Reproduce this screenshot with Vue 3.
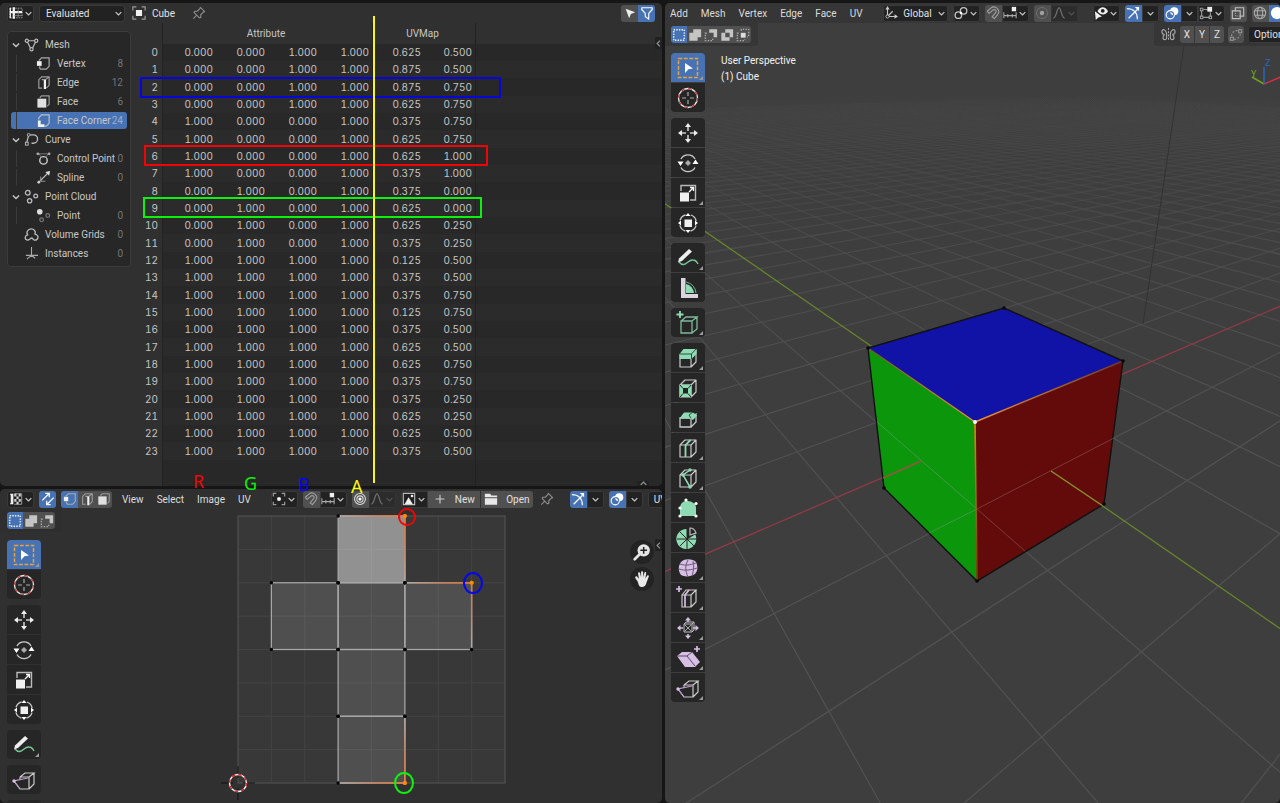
<template>
  <div class="workspace">
    <!-- Spreadsheet -->
    <section class="pane sheet">
      <header class="bar">
        <button class="btn dark wide" aria-label="Editor type"><Icon name="sheet" /><Icon name="down" :size="9" /></button>
        <label class="select-wrap">
          <select v-model="evalState" class="select" aria-label="Object evaluation state">
            <option>Evaluated</option>
            <option>Original</option>
          </select>
          <Icon name="down" :size="9" />
        </label>
        <span class="object"><Icon name="object" /></span>
        <span class="object-name">Cube</span>
        <button class="pin spaced" aria-label="Pin"><Icon name="pin" /></button>
        <div class="group push">
          <button class="btn gray" aria-label="Show only selected"><Icon name="cursorArrow" /></button>
          <button class="btn blue" aria-label="Filter"><Icon name="funnel" /></button>
        </div>
      </header>
      <div class="sheet-body">
        <aside class="tree-side">
          <ul class="tree">
            <li v-for="node in tree" :key="node.label" class="node"
              :class="{ child: node.child, root: !node.child, selected: node.label === selectedDomain }"
              @click="selectedDomain = node.label">
              <Icon v-if="node.open" class="twisty" name="down" :size="10" />
              <Icon class="node-icon" :name="node.icon" :size="15" />
              <span class="node-label">{{ node.label }}</span>
              <span class="count">{{ node.count }}</span>
            </li>
          </ul>
        </aside>
        <div class="table-wrap">
          <table>
            <colgroup>
              <col class="c-index"><col class="c-wide"><col class="c-attr"><col class="c-attr"><col class="c-attr">
              <col class="c-attr"><col class="c-uv"><col>
            </colgroup>
            <thead>
              <tr>
                <th class="index"></th>
                <th colspan="4" class="line">Attribute</th>
                <th colspan="2" class="line">UVMap</th>
                <th></th>
              </tr>
            </thead>
            <tbody>
              <tr v-for="(row, i) in rows" :key="i">
                <td class="index">{{ i }}</td>
                <td v-for="(value, c) in row" :key="c" :class="{ line: c === 3 || c === 5 }">{{ value.toFixed(3) }}</td>
                <td></td>
              </tr>
              <tr class="rest">
                <td class="index"></td>
                <td colspan="4" class="line"></td>
                <td colspan="2" class="line"></td>
                <td></td>
              </tr>
            </tbody>
          </table>
          <button class="tab side-tab" aria-label="Show sidebar"><Icon name="left" :size="9" /></button>
          <button class="tab bottom-tab" aria-label="Show footer"><Icon name="up" :size="9" /></button>
        </div>
      </div>
    </section>

    <!-- 3D viewport -->
    <section class="pane viewport">
      <svg class="canvas">
        <defs>
          <linearGradient id="fade" gradientUnits="userSpaceOnUse" x1="0" y1="90" x2="0" y2="440">
            <stop offset="0" stop-color="#4f4f4f" stop-opacity="0" />
            <stop offset="0.15" stop-color="#4f4f4f" stop-opacity="0.3" />
            <stop offset="0.5" stop-color="#4f4f4f" stop-opacity="0.8" />
            <stop offset="1" stop-color="#525252" />
          </linearGradient>
          <linearGradient id="edgeL" gradientUnits="userSpaceOnUse" x1="310" y1="419" x2="203" y2="345">
            <stop offset="0" stop-color="#f0913c" /><stop offset="1" stop-color="#6b5a20" />
          </linearGradient>
          <linearGradient id="edgeR" gradientUnits="userSpaceOnUse" x1="310" y1="419" x2="458" y2="358">
            <stop offset="0" stop-color="#f0913c" /><stop offset="1" stop-color="#6a3a2a" />
          </linearGradient>
          <linearGradient id="edgeD" gradientUnits="userSpaceOnUse" x1="310" y1="419" x2="313" y2="578">
            <stop offset="0" stop-color="#d98a10" /><stop offset="1" stop-color="#5f4a08" />
          </linearGradient>
        </defs>
        <path v-for="(line, i) in floorLines" :key="i" :d="line.d" fill="none" stroke="url(#fade)"
          :stroke-width="line.major ? 1.6 : 1.1" />
        <path d="M519 42L478 321" stroke="#323232" />
        <path :d="axisLine('x')" stroke="#933a47" stroke-width="1.3" />
        <path :d="axisLine('y')" stroke="#66862b" stroke-width="1.3" />
        <path d="M203 345L339 305L458 358L310 419z" fill="#1112a6" />
        <path d="M203 345L310 419L312 578L219 485z" fill="#0b960b" />
        <path d="M310 419L458 358L439 501L312 578z" fill="#620b0a" />
        <path d="M203 345L339 305L458 358L439 501L312 578L219 485z" fill="none" stroke="#111" stroke-width="1.4" />
        <path d="M212 419L312 506L264 530" fill="none" stroke="#9a9a9a" stroke-opacity="0.4" />
        <path d="M449 435L312 506L360 548" fill="none" stroke="#a08080" stroke-opacity="0.4" />
        <path d="M256 458L218 475" stroke="#93583f" stroke-width="1.4" />
        <path d="M386 468L438 503" stroke="#86982c" stroke-width="1.4" />
        <path d="M310 419L203 345" stroke="url(#edgeL)" stroke-width="1.4" />
        <path d="M310 419L458 358" stroke="url(#edgeR)" stroke-width="1.4" />
        <path d="M310 419L312 578" stroke="url(#edgeD)" stroke-width="1.6" />
        <circle v-for="(p, i) in cubePoints" :key="i" :cx="p[0]" :cy="p[1]" r="1.8" fill="#060606" />
        <circle cx="310" cy="419" r="2" fill="#fff" />
        <g fill="none" stroke-width="1.5">
          <path d="M599 81L616 74" stroke="#d42f42" />
          <path d="M599 81L587 74" stroke="#6aa521" />
          <path d="M599 81V64" stroke="#2a66bd" />
        </g>
        <text x="586" y="74" class="axis-text" fill="#6aa521">Y</text>
        <text x="600" y="63" class="axis-text" fill="#2a66bd">Z</text>
      </svg>

      <header class="bar flush">
        <nav class="menus">
          <button v-for="m in viewMenus" :key="m" class="menu">{{ m }}</button>
        </nav>
        <button class="btn dark global spaced"><Icon name="axes" /><span>Global</span><Icon name="down" :size="9" /></button>
        <button class="btn dark wide" aria-label="Pivot point"><Icon name="link" /><Icon name="down" :size="9" /></button>
        <SnapGroup />
        <FalloffGroup />
        <button class="btn dark wide spaced" aria-label="Visibility"><Icon name="eye" /><Icon name="down" :size="9" /></button>
        <ToggleGroup icon="gizmo" label="Gizmos" />
        <div class="group">
          <button class="btn blue" aria-label="Overlays"><Icon name="overlay" /></button>
          <button class="btn dark" aria-label="Overlay options"><Icon name="down" :size="9" /></button>
          <button class="btn dark wide" aria-label="Mesh edit overlays"><Icon name="editBox" /><Icon name="down" :size="9" /></button>
        </div>
        <button class="btn gray" aria-label="X-Ray"><Icon name="xray" /></button>
        <div class="group">
          <button class="btn gray" aria-label="Wireframe"><Icon name="globe" /></button>
          <button class="btn blue" aria-label="Solid"><Icon name="ball" /></button>
        </div>
      </header>

      <div class="settings">
        <div class="strip strip-left">
          <div class="group">
            <button v-for="(m, i) in selectModes" :key="m" class="btn" :class="i ? 'gray' : 'blue'" :aria-label="m">
              <Icon :name="m" />
            </button>
          </div>
        </div>
        <div class="strip strip-right">
          <Icon name="butterfly" :size="15" />
          <div class="group xyz">
            <button v-for="a in ['X', 'Y', 'Z']" :key="a" class="btn gray">{{ a }}</button>
          </div>
          <button class="btn gray" aria-label="Auto merge"><Icon name="merge" /></button>
          <button class="btn dark options">Options</button>
        </div>
      </div>

      <div class="view-body">
        <Toolbar :groups="viewTools" />
        <p class="view-label">User Perspective<br>(1) Cube</p>
      </div>
    </section>

    <!-- UV editor -->
    <section class="pane uv">
      <svg class="canvas">
        <defs>
          <linearGradient v-for="e in hotEdges" :id="e.id" :key="e.id" gradientUnits="userSpaceOnUse" :x1="e.a[0]"
            :y1="e.a[1]" :x2="e.b[0]" :y2="e.b[1]">
            <stop offset="0" stop-color="#e87a38" />
            <stop offset="0.4" stop-color="#c9805a" />
            <stop offset="1" stop-color="#b0aaa6" />
          </linearGradient>
        </defs>
        <rect x="238" y="27" width="267" height="267" fill="#383838" />
        <path :d="uvGrid" stroke="#434343" fill="none" />
        <rect x="238" y="27" width="267" height="267" fill="none" stroke="#555" />
        <rect v-for="(f, i) in uvFaces" :key="i" :x="f.x" :y="f.y" :width="cell" :height="cell"
          :fill="f.on ? '#fff' : '#bbb'" :fill-opacity="f.on ? 0.45 : 0.18" stroke="#a8a8a8" stroke-width="1.2" />
        <path v-for="e in hotEdges" :key="e.id" :d="`M${e.a}L${e.b}`" :stroke="`url(#${e.id})`" stroke-width="1.5" />
        <circle v-for="(p, i) in uvPoints" :key="i" :cx="p[0]" :cy="p[1]" r="1.7" fill="#050505" />
        <circle v-for="e in hotEdges" :key="e.id" :cx="e.a[0]" :cy="e.a[1]" r="2" fill="#ff8a0a" />
        <path d="M221 294h12M243 294h12M238 277v12M238 299v12" stroke="#111" />
        <circle cx="238" cy="294" r="8.5" fill="none" stroke="#f2f2f2" stroke-width="1.4" />
        <circle cx="238" cy="294" r="8.5" fill="none" stroke="#e02020" stroke-width="1.4" stroke-dasharray="3.3 3.4" />
      </svg>

      <header class="bar">
        <button class="btn dark wide" aria-label="Editor type"><Icon name="uvEditor" /><Icon name="down" :size="9" /></button>
        <button class="btn blue" aria-label="Sync selection"><Icon name="sync" /></button>
        <div class="group">
          <button class="btn blue" aria-label="Vertex"><Icon name="vertex" /></button>
          <button class="btn gray" aria-label="Edge"><Icon name="edge" /></button>
          <button class="btn gray" aria-label="Face"><Icon name="face" /></button>
        </div>
        <nav class="menus">
          <button v-for="m in uvMenus" :key="m" class="menu">{{ m }}</button>
        </nav>
        <button class="btn dark wide spaced" aria-label="Pivot"><Icon name="pivot" /><Icon name="down" :size="9" /></button>
        <SnapGroup />
        <FalloffGroup active />
        <div class="group image-group">
          <button class="btn dark wide" aria-label="Browse image"><Icon name="image" /><Icon name="down" :size="9" /></button>
          <button class="btn gray action"><Icon name="plus" /><span>New</span></button>
          <button class="btn gray action"><Icon name="folder" /><span>Open</span></button>
        </div>
        <button class="pin" aria-label="Pin"><Icon name="pin" /></button>
        <ToggleGroup icon="gizmo" label="Gizmos" />
        <ToggleGroup icon="overlay" label="Overlays" />
        <button class="btn dark options">UVMap</button>
      </header>

      <div class="settings">
        <div class="strip strip-uv">
          <div class="group">
            <button v-for="(m, i) in selectModes.slice(0, 3)" :key="m" class="btn" :class="i ? 'gray' : 'blue'"
              :aria-label="m">
              <Icon :name="m" />
            </button>
          </div>
        </div>
      </div>
      <div class="view-body uv-body">
        <Toolbar :groups="uvTools" />
        <div class="nav-gizmos">
          <button class="round" aria-label="Zoom"><Icon name="zoom" :size="18" /></button>
          <button class="round" aria-label="Pan"><Icon name="hand" :size="18" /></button>
        </div>
        <button class="tab uv-tab" aria-label="Show sidebar"><Icon name="left" :size="9" /></button>
      </div>
    </section>

    <!-- Marks drawn over the editors -->
    <svg class="marks">
      <g fill="none" stroke-width="2">
        <rect x="141" y="78" width="359" height="19" stroke="#0505dc" />
        <rect x="145" y="146" width="342" height="19" stroke="#f00505" />
        <rect x="144" y="198" width="337" height="19" stroke="#0df20d" />
        <path d="M374 16V483" stroke="#fbf715" />
        <circle cx="407" cy="517" r="8" stroke="#f00505" />
        <ellipse cx="473" cy="583" rx="9" ry="10" stroke="#0505f0" />
        <ellipse cx="404" cy="783" rx="9" ry="10" stroke="#0df20d" />
      </g>
      <text x="193" y="488" fill="#f00505">R</text>
      <text x="244" y="490" fill="#0df20d">G</text>
      <text x="298" y="491" fill="#0505f0">B</text>
      <text x="351" y="493" fill="#fbf715">A</text>
    </svg>
  </div>
</template>

<script setup>
import { ref, h } from 'vue'

// wire cube shared by the mesh tools
const box = 'M4 9h11v12H4zM4 9l5-5h11l-5 5M20 4v12l-5 5'
const wire = (color = '#c9c9c9') => `<path d="${box}" fill="none" stroke="${color}" stroke-width="1.2" stroke-linejoin="round"/>`
const mint = '#8fdcb4'
const lilac = '#d7bfe6'

const icons = {
  down: '<path d="M3 5.5l5 5 5-5" fill="none" stroke="#c8c8c8" stroke-width="2.2"/>',
  up: '<path d="M3 10.500l5-5 5 5" fill="none" stroke="#999" stroke-width="2"/>',
  left: '<path d="M10.500 3l-5 5 5 5" fill="none" stroke="#999" stroke-width="2"/>',
  sheet: '<path d="M1 2.500h14v11H1z" fill="none" stroke="#999" stroke-dasharray="2 1"/><path d="M5.500 1.500v13M1 7h14" stroke="#f0f0f0" stroke-width="2.600"/><path d="M6 11h9M10.500 3v10" stroke="#888"/><path d="M1.500 2v12" stroke="#eee" stroke-width="1.500"/>',
  object: '<path d="M4.500 4.500h7v7h-7z" fill="#f0f0f0"/><path d="M1 5V1h4M11 1h4v4M15 11v4h-4M5 15H1v-4" fill="none" stroke="#999" stroke-width="1.400"/>',
  pin: '<path d="M9.500 1.500l5 5-1.500.5-3 3v3l-1.500.5-6-6L3 6h3l3-3zM5.500 10.500l-4 4" fill="none" stroke="#8c8c8c" stroke-width="1.300" stroke-linejoin="round"/>',
  cursorArrow: '<path d="M3 3l11 4-5 2-2 5z" fill="#eee"/>',
  funnel: '<path d="M2 2h12v2L10 8.500V15L6 12V8.500L2 4z" fill="none" stroke="#fff" stroke-width="1.300" stroke-linejoin="round"/>',
  mesh: '<path d="M4 4h8M3.500 5l3.500 7M12.500 5L9 12" stroke="#bbb" stroke-width="1.300"/><g fill="#272727" stroke="#bbb" stroke-width="1.300"><circle cx="3" cy="4" r="1.700"/><circle cx="13" cy="4" r="1.700"/><circle cx="8" cy="13" r="1.700"/></g>',
  vertex: '<path d="M3 5l3-3h8v9l-3 3H5l-1-1v-2" fill="none" stroke="#aaa" stroke-width="1.300"/><rect x="1" y="5.500" width="5" height="5" fill="#f0f0f0"/>',
  edge: '<path d="M6.500 14H3V5l3-3h8v9l-3 3M6 5h4l4-3" fill="none" stroke="#999" stroke-width="1.300"/><path d="M9.500 5v10" stroke="#f0f0f0" stroke-width="2.400"/>',
  face: '<path d="M4 4l2-2h8v9l-2 2" fill="none" stroke="#999" stroke-width="1.300"/><rect x="1.500" y="5" width="9.500" height="9.500" fill="#e0e0e0"/>',
  corner: '<path d="M3 7V5l3-3h8v9l-3 3H9" fill="none" stroke="#b8c0cc" stroke-width="1.300"/><path d="M2 8h3v4h4v3H2z" fill="#f0f0f0"/>',
  curve: '<path d="M5 3h5a4.500 4.500 0 010 9H8M5 3L3 11" fill="none" stroke="#bbb" stroke-width="1.400"/><g fill="#272727" stroke="#bbb"><circle cx="5" cy="3" r="1.500"/><rect x="1.500" y="11" width="3" height="3"/></g>',
  control: '<circle cx="8" cy="10" r="4" fill="none" stroke="#ccc" stroke-width="1.500"/><path d="M1 3h14M3 3l3 4M13 3l-3 4" stroke="#777"/><circle cx="2" cy="3" r="1.500" fill="#aaa"/><circle cx="14" cy="3" r="1.500" fill="#aaa"/>',
  spline: '<path d="M2 14l4-4 4-4 4-4" stroke="#bbb" stroke-width="1.500"/><path d="M15 1l-5 1 4 4z" fill="#ddd"/><path d="M5 7v5h5" stroke="#999" fill="none"/><circle cx="3" cy="13" r="1.500" fill="#ccc"/>',
  points: '<g fill="none" stroke="#bbb" stroke-width="1.400"><circle cx="4" cy="4" r="2.500"/><circle cx="12.500" cy="7.500" r="2"/><circle cx="6" cy="12.500" r="2.300"/></g>',
  point: '<circle cx="4" cy="4" r="3" fill="#ddd"/><g fill="none" stroke="#777" stroke-width="1.300"><circle cx="12.500" cy="8" r="2"/><circle cx="6" cy="12.500" r="2"/></g>',
  volume: '<path d="M3.500 14C0 13 1 9 4 8.500 2 6 4 2 7.500 2S13 5 11.500 7.500C14.500 8 16 11 14 13s-4 1-5-1c-1.500-1.500-2.500 2-5.500 2z" fill="none" stroke="#bbb" stroke-width="1.400" stroke-linejoin="round"/>',
  instances: '<path d="M8 1v9M2 10h13M8 10l-5 4M8 5v5l4 3" fill="none" stroke="#aaa" stroke-width="1.200"/>',
  axes: '<path d="M4 3v9h9M4 12l6-6" fill="none" stroke="#c8c8c8" stroke-width="1.300"/><path d="M4 0l2.500 4h-5zM16 12l-4 2.500v-5z" fill="#c8c8c8"/><circle cx="4" cy="12" r="1.800" fill="#1f1f1f" stroke="#c8c8c8"/>',
  link: '<g fill="none" stroke="#c4c4c4" stroke-width="1.500"><circle cx="5" cy="10.500" r="3.700"/><circle cx="11" cy="5.500" r="3.700"/></g><circle cx="8" cy="8" r="1.400" fill="#fff"/>',
  magnet: '<path d="M1.500 6l4-3.500c5-4 11.500 2 8 7l-4 5-2.500-2 4-5C13 5 9.500 3 7.500 5l-4 3.500z" fill="none" stroke="#a0a0a0" stroke-width="1.200" stroke-linejoin="round"/>',
  increment: '<path d="M1 7v7M15 7v7M5.500 9v4M10.500 9v4M1 11h14" stroke="#aaa" stroke-width="1.200"/><rect x="10" y="1" width="5" height="5" fill="#f0f0f0"/>',
  dot: '<circle cx="8" cy="8" r="6.300" fill="none" stroke="#747474"/><circle cx="8" cy="8" r="2.500" fill="#a0a0a0"/>',
  dotOn: '<g fill="none" stroke="#ddd" stroke-width="1.200"><circle cx="8" cy="8" r="6.200"/><circle cx="8" cy="8" r="3.600"/></g><circle cx="8" cy="8" r="1.800" fill="#fff"/>',
  falloff: '<path d="M1.500 14c4-1 4-12 6.500-12s2.500 11 6.500 12" fill="none" stroke="#777" stroke-width="1.300"/>',
  dim: '<path d="M3 5.500l5 5 5-5" fill="none" stroke="#555" stroke-width="2"/>',
  eye: '<path d="M4 6c3-6 9-6 12 0-3 5-8 5-12 0z" fill="#eee"/><circle cx="10" cy="5.500" r="2.200" fill="#222"/><path d="M1 6l8 6-4 1-3 3z" fill="#eee"/>',
  gizmo: '<path d="M1 3c7 0 12 4 12 12M3 14L13 4" fill="none" stroke="#fff" stroke-width="1.300"/><path d="M15 1v5L10 1z" fill="#fff"/>',
  overlay: '<circle cx="10.500" cy="6" r="4.700" fill="#fff"/><circle cx="6" cy="10" r="4.700" fill="none" stroke="#fff" stroke-width="1.300"/><path d="M6 6.500a4 4 0 014 4" stroke="#4772b3" fill="none" stroke-width="1.300"/>',
  editBox: '<path d="M3 5v7M5 4h5M13 7v5M5 13h7" stroke="#999" stroke-width="1.300"/><rect x="9.500" y="1" width="5.500" height="5.500" fill="#eee"/><g fill="none" stroke="#aaa"><rect x="1.500" y="2.500" width="3" height="3"/><rect x="1.500" y="11.500" width="3" height="3"/><rect x="11.500" y="11.500" width="3" height="3"/></g>',
  xray: '<path d="M1.500 5.500h9v9h-9zM5 5V2h9.500v9.500H11" fill="none" stroke="#c0c0c0" stroke-width="1.300"/><path d="M5 5.500v6h6" fill="none" stroke="#c0c0c0" stroke-dasharray="1 1.500"/>',
  globe: '<g fill="none" stroke="#aaa" stroke-width="1.200"><circle cx="8" cy="8" r="6.500"/><ellipse cx="8" cy="8" rx="3" ry="6.500"/><path d="M2 5.500h12M2 10.500h12"/></g>',
  ball: '<circle cx="8" cy="8" r="7" fill="#fff"/>',
  set: '<rect x="2" y="2" width="12" height="12" fill="none" stroke="#fff" stroke-width="1.500" stroke-dasharray="1.500 1.500"/>',
  extend: '<path d="M6 1.500h9v9h-4v4H1.500v-9H6z" fill="#c4c4c4"/>',
  subtract: '<path d="M6 1.500h9v9h-4V5.500H6z" fill="#c4c4c4"/><path d="M3 6H1.500v8.500H10V12" fill="none" stroke="#aaa" stroke-width="1.500" stroke-dasharray="1.600 1.600"/>',
  difference: '<path fill-rule="evenodd" d="M6 1.500h9v9h-4v4H1.500v-9H6zM6 5.500v5h5v-5z" fill="#c4c4c4"/>',
  intersect: '<rect x="5.500" y="5.500" width="5.500" height="5.500" fill="#ddd"/><path d="M6 3V1.500h8.500V10H13M3 6H1.500v8.500H10V13" fill="none" stroke="#aaa" stroke-width="1.500" stroke-dasharray="1.600 1.600"/>',
  butterfly: '<path d="M6 7C5 2 1 2 1 4.500S2 8 4 8c-2.500 1-2.500 5.500 0 5.500S6 11 6 9zM10 7c1-5 5-5 5-2.500S14 8 12 8c2.500 1 2.500 5.500 0 5.500S10 11 10 9z" fill="none" stroke="#aaa" stroke-width="1.200"/><path d="M8 1v14" stroke="#bbb" stroke-dasharray="2 1.500"/>',
  merge: '<g fill="none" stroke="#999" stroke-width="1.200"><rect x="11" y="2" width="3.500" height="3.500"/><rect x="1.500" y="10.500" width="3.500" height="3.500"/><path d="M3 9c0-4 3-6 7-6M6 13c4 0 6-3 7-6" stroke-dasharray="2 2"/></g>',
  uvEditor: '<path d="M6 2h8.500v12H6" fill="none" stroke="#aaa"/><path d="M1 2h4v12H1l1-2V4z" fill="#eee"/><path d="M6 2h2.500v3H6zM11 2h2.500v3H11zM8.500 5H11v3H8.500zM6 8h2.500v3H6zM11 8h2.500v3H11zM8.500 11H11v3H8.500z" fill="#d0d0d0"/>',
  sync: '<path d="M1.500 9.500L9 2M5 1.500h4.500V6M14.500 6.500L7 14M11 14.500H6.500V10" fill="none" stroke="#fff" stroke-width="1.400"/>',
  pivot: '<path d="M1.500 5V1.500H5M11 1.500h3.500V5M14.500 11v3.500H11M5 14.500H1.500V11" fill="none" stroke="#999" stroke-width="1.400"/><circle cx="8" cy="8" r="2.300" fill="#f0f0f0"/>',
  image: '<path d="M1.500 1.500h13v13h-13z" fill="none" stroke="#bbb" stroke-width="1.300"/><path d="M3 14l4.500-8 5 8z" fill="#f0f0f0"/><circle cx="11.500" cy="4.500" r="1.500" fill="#f0f0f0"/>',
  plus: '<path d="M8 3v10M3 8h10" stroke="#ccc" stroke-width="1.300"/>',
  folder: '<path d="M1 2h6l1.500 2H15v2H1zM1 7h14v7.500H1z" fill="#e8e8e8"/>',
  zoom: '<circle cx="9.500" cy="6.500" r="5.500" fill="#e4e4e4"/><path d="M5.500 10.500L1.500 14.500" stroke="#e4e4e4" stroke-width="2.400" stroke-linecap="round"/><path d="M9.500 3.500v6M6.500 6.500h6" stroke="#222" stroke-width="1.300"/>',
  hand: '<path d="M4 10L2 7c-.5-1 1-2 1.800-1l1.500 2-.8-5c0-1.300 1.500-1.500 1.800-.3L7.200 6.500V2c0-1.300 1.700-1.300 1.800 0l.2 4.500.9-4c.3-1.200 1.800-1 1.600.3L11 7.500l1.500-2.300c.7-1 2-.2 1.500.9L12 11c-.8 3-2 4-4.500 4S5 12.500 4 10z" fill="#e8e8e8"/>',

  // toolbar glyphs, 24 x 24
  tSelect: '<rect x="2.500" y="2.500" width="19" height="19" fill="none" stroke="#e8a33d" stroke-width="1.500" stroke-dasharray="3.800 1.600"/><path d="M9 7l8 5.500-4.500.8L9 17z" fill="#fff"/>',
  tCursor: '<circle cx="12" cy="12" r="9.500" fill="none" stroke="#eee" stroke-width="1.300"/><circle cx="12" cy="12" r="9.500" fill="none" stroke="#c04545" stroke-width="1.300" stroke-dasharray="3.700 3.760"/><path d="M12 6v4M12 14v4M6 12h4M14 12h4" stroke="#aaa" stroke-width="1.200"/>',
  tMove: '<path d="M12 2l3 4H9zM12 22l3-4H9zM2 12l4-3v6zM22 12l-4-3v6z" fill="#eee"/><path d="M12 6v4M12 14v4M6 12h4M14 12h4" stroke="#ccc" stroke-width="1.600"/>',
  tRotate: '<path d="M5 8a8 8 0 0114 0M19 16.500a8 8 0 01-14 0" fill="none" stroke="#ccc" stroke-width="1.400"/><path d="M12 9l3 3-3 3-3-3z" fill="#aaa"/><path d="M1.500 10.500h6L4.500 15zM22.500 13h-6l3-4.500z" fill="#fff"/>',
  tScale: '<path d="M5 10V4.500h14.500V19H14" fill="none" stroke="#bbb" stroke-width="1.400"/><rect x="4" y="11.500" width="9" height="9" fill="#f0f0f0"/><path d="M13 11l4-4M14 6.500h3.500V10" stroke="#fff" fill="none" stroke-width="1.300"/>',
  tTransform: '<circle cx="12" cy="12" r="8.500" fill="none" stroke="#ccc" stroke-width="1.300" stroke-dasharray="8 5.350" stroke-dashoffset="-2.700"/><rect x="8.500" y="8.500" width="7.500" height="7.500" fill="#f0f0f0"/><path d="M12 2l2.500 3h-5zM12 22l2.500-3h-5zM2 12l3-2.500v5zM22 12l-3-2.500v5z" fill="#fff"/>',
  tAnnotate: '<path d="M2 16.500l1-4L13 3l3 2.500L6 15z" fill="#eee"/><path d="M3 16c6 7 9-3 14-2 3 0 4 2 5 4" fill="none" stroke="#78c79b" stroke-width="1.400"/>',
  tMeasure: '<path d="M5 2h4.500v16H22v4H5z" fill="#d9d4dd"/><path d="M10 8a10 10 0 018 9h-8z" fill="#8fdcb4"/><path d="M10 6a12 12 0 0110 11" fill="none" stroke="#6bb28d"/>',
  tAdd: '<path d="M6 9h11v12H6zM6 9l5-4h11l-5 4M22 5v12l-5 4" transform="translate(-1 1)" fill="none" stroke="#7fb99a" stroke-width="1.300"/><path d="M4 0v7M.500 3.500h7" stroke="#8fdcb4" stroke-width="1.800"/>',
  tExtrude: wire() + `<path d="M3.500 8l4-5h13v5l-5 5h-12z" fill="${mint}"/><path d="M4 8h11.500l4.500-5M15.500 8v5" stroke="#27553f" fill="none"/>`,
  tInset: wire() + `<path d="M3.500 8.500h12v12.500h-12z" fill="${mint}"/><path d="M7 12h5v5.500H7z" fill="#252525"/><path d="M4 9l3 3.500M15 9l-3 3.500M4 21l3-3.500M15 21l-3-3.500" stroke="#222"/>`,
  tBevel: '<path d="M4 12h11v9H4zM15 12l5-4v8l-5 5" fill="none" stroke="#c9c9c9" stroke-width="1.300"/>' + `<path d="M3.500 12.500l4.500-6h9l4 3-4 4.500-2-1.500z" fill="${mint}"/><path d="M15 12l-2-3 4-3" stroke="#27553f" fill="none"/>`,
  tLoop: wire() + `<path d="M9.500 21V9l5-5" fill="none" stroke="${mint}" stroke-width="1.800"/>`,
  tKnife: wire() + `<path d="M14 4L7 9l7 12" fill="none" stroke="${mint}" stroke-width="1.500"/><g fill="${mint}"><circle cx="14" cy="4" r="1.700"/><circle cx="7" cy="9" r="1.700"/><circle cx="14" cy="21" r="1.700"/></g>`,
  tPoly: `<path d="M4 20V12c0-4 3-7 6-7 4 0 9 1 10 6v9z" fill="${mint}"/><g fill="#fff"><circle cx="4" cy="20" r="1.600"/><circle cx="4" cy="12" r="1.600"/><circle cx="10" cy="4" r="1.600"/><circle cx="20" cy="7.500" r="1.600"/><circle cx="20" cy="20" r="1.600"/></g>`,
  tSpin: `<path d="M11 13V3a10 10 0 108 5z" fill="${mint}"/><path d="M11 13V3M11 13L4 6M11 13H1M11 13l-7 7M11 13v10M11 13l7 7M11 13h10M11 13l8-5" stroke="#252525"/><path d="M14 2v7l6-2c-1-3-3-5-6-5z" fill="none" stroke="#bbb" stroke-width="1.200"/>`,
  tSmooth: `<path d="M5 6c4-4 12-3 15 0 2 5 2 8-1 12-4 3-11 3-14 1-3-4-3-9 0-13z" fill="${lilac}"/><path d="M3 13c6 2 12 1 18-1M12 4c-3 6-3 10 0 17M4 8c6 2 10 1 16-1M17 5c1 5 1 9-1 15" fill="none" stroke="#6a5a73"/>`,
  tSlide: '<path d="M6 9h9v12H6zM6 9l4-5h10l-5 5M20 4v12l-5 5" fill="none" stroke="#c9c9c9" stroke-width="1.200"/>' + `<path d="M9 21V9l4-5" fill="none" stroke="${lilac}" stroke-width="1.700"/><path d="M3 0v6M0 3h6" stroke="${lilac}" stroke-width="1.700"/>`,
  tShrink: `<path d="M8 8h8v8H8zM8 8l2-2h8l-2 2M18 6v8l-2 2" fill="none" stroke="#bbb"/><path d="M9 9l6 6M15 9l-6 6" stroke="#aaa"/><g fill="${lilac}"><path d="M12 1l3 3.500H9zM12 23l3-3.500H9zM1 12l3.500-3v6zM23 12l-3.500-3v6z"/></g><path d="M12 2v4M12 18v4M3 12h4M17 12h4" stroke="${lilac}" stroke-width="1.500"/>`,
  tShear: `<path d="M1 10l5-4h10l8 10-5 5H9z" fill="${lilac}"/><path d="M1 10h10l8 10M11 10l5-4" fill="none" stroke="#554a5c"/><path d="M21 0v6M18 3h6" stroke="${lilac}" stroke-width="1.700"/>`,
  tRip: '<path d="M8 9h9v12H8l-6-8M8 9l5-4h9l-5 4M22 5v11l-5 5M8 9v3" fill="none" stroke="#c9c9c9" stroke-width="1.200"/><path d="M8 21l-6-8 14-3" fill="none" stroke="#b99ccb" stroke-width="1.200"/><circle cx="2" cy="13" r="1.700" fill="#d7bfe6"/>'
}

const Icon = (props) => h('svg', {
  viewBox: /^t[A-Z]/.test(props.name) ? '0 0 24 24' : '0 0 16 16',
  width: props.size || 14,
  height: props.size || 14,
  'aria-hidden': 'true',
  class: 'icon',
  innerHTML: icons[props.name]
})
Icon.props = ['name', 'size']

const iconButton = (cls, label, ...names) => h('button', { class: 'btn ' + cls, 'aria-label': label },
  names.map(n => h(Icon, { name: n, size: n === 'down' || n === 'dim' ? 9 : 14 })))

const SnapGroup = () => h('div', { class: 'group' }, [
  iconButton('gray', 'Snap', 'magnet'),
  iconButton('dark wide', 'Snapping', 'increment', 'down')
])

const FalloffGroup = (props) => h('div', { class: 'group' }, [
  iconButton('gray', 'Proportional editing', props.active ? 'dotOn' : 'dot'),
  iconButton('faint wide', 'Falloff', 'falloff', 'dim')
])
FalloffGroup.props = { active: Boolean }

const ToggleGroup = (props) => h('div', { class: 'group' }, [
  iconButton('blue', props.label, props.icon),
  iconButton('dark', props.label + ' options', 'down')
])
ToggleGroup.props = ['icon', 'label']

// tool names ending in + open a sub menu
const Toolbar = (props) => h('div', { class: 'toolbar' }, props.groups.map((group, g) =>
  h('div', { class: 'tool-group' }, group.map((tool, t) => {
    const name = tool.replace('+', '')
    return h('button', {
      class: ['tool', { active: !g && !t, more: tool.endsWith('+') }],
      'aria-label': name.slice(1)
    }, [h(Icon, { name, size: 24 })])
  }))
))
Toolbar.props = ['groups']

const evalState = ref('Evaluated')
const selectedDomain = ref('Face Corner')

const tree = [
  { label: 'Mesh', icon: 'mesh', open: true },
  { label: 'Vertex', icon: 'vertex', child: true, count: 8 },
  { label: 'Edge', icon: 'edge', child: true, count: 12 },
  { label: 'Face', icon: 'face', child: true, count: 6 },
  { label: 'Face Corner', icon: 'corner', child: true, count: 24 },
  { label: 'Curve', icon: 'curve', open: true },
  { label: 'Control Point', icon: 'control', child: true, count: 0 },
  { label: 'Spline', icon: 'spline', child: true, count: 0 },
  { label: 'Point Cloud', icon: 'points', open: true },
  { label: 'Point', icon: 'point', child: true, count: 0 },
  { label: 'Volume Grids', icon: 'volume', count: 0 },
  { label: 'Instances', icon: 'instances', count: 0 }
]

const blue = [0, 0, 1, 1]
const red = [1, 0, 0, 1]
const green = [0, 1, 0, 1]
const white = [1, 1, 1, 1]
const uvs = [
  [0.625, 0.5], [0.875, 0.5], [0.875, 0.75], [0.625, 0.75],
  [0.375, 0.75], [0.625, 0.75], [0.625, 1], [0.375, 1],
  [0.375, 0], [0.625, 0], [0.625, 0.25], [0.375, 0.25],
  [0.125, 0.5], [0.375, 0.5], [0.375, 0.75], [0.125, 0.75],
  [0.375, 0.5], [0.625, 0.5], [0.625, 0.75], [0.375, 0.75],
  [0.375, 0.25], [0.625, 0.25], [0.625, 0.5], [0.375, 0.5]
]
const rows = uvs.map((uv, i) => [...([blue, red, green][Math.floor(i / 4)] || white), ...uv])

const viewMenus = ['Add', 'Mesh', 'Vertex', 'Edge', 'Face', 'UV']
const uvMenus = ['View', 'Select', 'Image', 'UV']
const selectModes = ['set', 'extend', 'subtract', 'difference', 'intersect']

const viewTools = [
  ['tSelect+', 'tCursor'],
  ['tMove', 'tRotate', 'tScale+', 'tTransform'],
  ['tAnnotate+', 'tMeasure'],
  ['tAdd+'],
  ['tExtrude+', 'tInset', 'tBevel', 'tLoop+', 'tKnife+', 'tPoly', 'tSpin', 'tSmooth+', 'tSlide+', 'tShrink+', 'tShear+', 'tRip+']
]
const uvTools = [
  ['tSelect+', 'tCursor'],
  ['tMove', 'tRotate', 'tScale', 'tTransform'],
  ['tAnnotate+'],
  ['tRip'],
  ['tMove']
]

// perspective projection of the floor plane
const project = (u, v) => {
  const w = 1 + 0.07943 * u + 0.10043 * v
  return [
    ((992.7 + 144.56 * u + 47.09 * v) / w - 665).toFixed(1),
    ((430.1 + 5.82 * u + 6.86 * v) / w - 3).toFixed(1)
  ]
}
const far = 90
const nearV = u => Math.max(-8, (0.3 - 1 - 0.07943 * u) / 0.10043)
const nearU = v => Math.max(-8, (0.3 - 1 - 0.10043 * v) / 0.07943)

const floorLines = []
for (let n = -6; n <= 70; n++) {
  if (n === 0) continue
  floorLines.push({ d: `M${project(n, nearV(n))}L${project(n, far)}`, major: n % 10 === 0 })
  floorLines.push({ d: `M${project(nearU(n), n)}L${project(far, n)}`, major: n % 10 === 0 })
}
const axisLine = axis => axis === 'x'
  ? `M${project(nearU(0), 0)}L${project(far, 0)}`
  : `M${project(0, nearV(0))}L${project(0, far)}`

const cubePoints = [[203, 345], [339, 305], [458, 358], [439, 501], [312, 578], [219, 485]]

// unwrapped cube, bottom left of the UV square at 238 / 294
const cell = 66.75
const uvXY = (u, v) => [238 + 267 * u, 294 - 267 * v]
const uvFaces = [[0.375, 1, true], [0.125, 0.75], [0.375, 0.75], [0.625, 0.75], [0.375, 0.5], [0.375, 0.25]]
  .map(([u, v, on]) => ({ x: uvXY(u, v)[0], y: uvXY(u, v)[1], on }))
const uvPoints = uvs.map(([u, v]) => uvXY(u, v))
const hotEdges = [
  [[0.625, 1], [0.375, 1]], [[0.625, 1], [0.625, 0.75]],
  [[0.875, 0.75], [0.625, 0.75]], [[0.875, 0.75], [0.875, 0.5]],
  [[0.625, 0], [0.375, 0]], [[0.625, 0], [0.625, 0.25]]
].map(([a, b], i) => ({ id: 'hot' + i, a: uvXY(...a), b: uvXY(...b) }))
let uvGrid = ''
for (let i = 1; i < 8; i++) {
  uvGrid += `M${uvXY(i / 8, 0)}V27M${uvXY(0, i / 8)}H505`
}
</script>

<style>
body {
  margin: 0;
  background: #161616;
}

.icon {
  flex: none;
}

.btn {
  display: flex;
  align-items: center;
  justify-content: center;
  flex: none;
  width: 17px;
  height: 17px;
  padding: 0;
  border: 0;
  border-radius: 3px;
  color: #e0e0e0;
  font: inherit;
  gap: 1px;
}

.btn.wide {
  width: 27px;
}

.btn.dark {
  background: #222;
  box-shadow: inset 0 0 0 1px #3a3a3a;
}

.btn.faint {
  background: #2c2c2c;
  box-shadow: inset 0 0 0 1px #353535;
}

.btn.gray {
  background: #505050;
}

.btn.blue {
  background: #4772b3;
}

.group {
  display: flex;
  flex: none;
}

.group .btn:not(:first-child) {
  border-top-left-radius: 0;
  border-bottom-left-radius: 0;
}

.group .btn:not(:last-child) {
  border-top-right-radius: 0;
  border-bottom-right-radius: 0;
}

.toolbar {
  display: flex;
  flex-direction: column;
  gap: 6px;
  width: 34px;
  flex: none;
}

.tool-group {
  display: flex;
  flex-direction: column;
  gap: 1px;
  border-radius: 4px;
  overflow: hidden;
  flex: none;
}

.tool {
  position: relative;
  display: flex;
  align-items: center;
  justify-content: center;
  height: 29px;
  padding: 0;
  border: 0;
  background: #262626;
}

.tool.active {
  background: #4772b3;
}

.tool.more::after {
  content: '';
  position: absolute;
  right: 2px;
  bottom: 2px;
  border: 2px solid transparent;
  border-right-color: #9a9a9a;
  border-bottom-color: #9a9a9a;
}
</style>

<style scoped>
.workspace {
  position: relative;
  box-sizing: border-box;
  display: grid;
  grid-template-columns: minmax(0, 662fr) minmax(0, 615fr);
  grid-template-rows: minmax(0, 483fr) minmax(0, 314fr);
  gap: 3px;
  height: 100vh;
  padding-top: 3px;
  overflow: hidden;
  color: #dcdcdc;
  font-family: Roboto, "Liberation Sans", sans-serif;
  font-size: 10px;
}

.pane {
  position: relative;
  display: flex;
  flex-direction: column;
  overflow: hidden;
  border-radius: 5px;
  background: #303030;
}

.viewport {
  grid-column: 2;
  grid-row: 1 / 3;
  background: #3e3e3e;
}

.canvas {
  position: absolute;
  inset: 0;
  width: 100%;
  height: 100%;
}

.bar {
  position: relative;
  display: flex;
  align-items: center;
  gap: 5px;
  flex: none;
  height: 20px;
  padding: 0 7px;
  background: #303030;
}

.bar.flush {
  padding: 0;
  background: #363636;
}

.spaced {
  margin-left: 10px;
}

.push {
  margin-left: auto;
}

.menus {
  display: flex;
  gap: 3px;
  flex: none;
}

.menu {
  padding: 0 5px;
  border: 0;
  background: none;
  color: #dcdcdc;
  font: inherit;
}

.select-wrap {
  position: relative;
  flex: none;
  width: 86px;
}

.select {
  display: block;
  width: 100%;
  height: 17px;
  padding: 0 6px;
  border: 1px solid #3a3a3a;
  border-radius: 3px;
  appearance: none;
  background: #222;
  color: #e0e0e0;
  font: inherit;
}

.select-wrap svg {
  position: absolute;
  right: 2px;
  top: 4px;
}

.object {
  display: flex;
  justify-content: center;
  width: 17px;
}

.object-name {
  color: #e4e4e4;
}

.pin {
  display: flex;
  flex: none;
  width: 27px;
  padding: 0 2px;
  border: 0;
  background: none;
}

.global {
  width: 65px;
  gap: 5px;
}

.action {
  width: 52px;
  gap: 8px;
}

.image-group .action + .action {
  margin-left: 1px;
}

.options {
  width: 64px;
  padding-left: 6px;
  justify-content: flex-start;
}

/* spreadsheet */
.sheet-body {
  display: flex;
  flex: 1;
  min-height: 0;
}

.tree-side {
  flex: none;
  width: 124px;
  padding: 8px 6px 0 7px;
}

.tree {
  display: flex;
  flex-direction: column;
  gap: 2px;
  margin: 0;
  padding: 4px 3px;
  border: 1px solid #3b3b3b;
  border-radius: 4px;
  background: #272727;
  list-style: none;
}

.node {
  position: relative;
  display: flex;
  align-items: center;
  height: 17px;
  padding-right: 4px;
  border-radius: 3px;
  color: #c8c8c8;
}

.root {
  padding-left: 13px;
}

.child {
  padding-left: 25px;
}

.child::before {
  content: '';
  position: absolute;
  left: 5px;
  top: 0;
  bottom: 0;
  width: 1px;
  background: #3a3a3a;
}

.twisty {
  position: absolute;
  left: 0;
}

.node-label {
  margin-left: 6px;
  white-space: nowrap;
}

.count {
  margin-left: auto;
  color: #757575;
}

.selected {
  background: #4772b3;
}

.selected .count {
  color: #a0aec4;
}

.table-wrap {
  position: relative;
  flex: 1;
  display: flex;
  min-width: 0;
  overflow: hidden;
  background: #282828;
}

table {
  width: 100%;
  height: 100%;
  table-layout: fixed;
  border-collapse: separate;
  border-spacing: 0;
  color: #c6c6c6;
  font-variant-numeric: tabular-nums;
}

.c-index {
  width: 26px;
}

.c-wide {
  width: 54px;
}

.c-attr {
  width: 52px;
}

.c-uv {
  width: 51px;
}

th {
  height: 21px;
  padding: 0 4px 0 0;
  background: #303030;
  font-weight: 400;
}

td {
  height: 17px;
  padding: 0 4px 0 0;
  text-align: right;
  line-height: 17px;
  font-family: Inter, "Liberation Sans", sans-serif;
}

tbody tr:nth-child(3n) td {
  height: 18px;
}

tbody tr:nth-child(even) {
  background: #2b2b2b;
}

.index,
td.index {
  background: #303030;
  border-right: 1px solid #222;
}

td.line,
th.line {
  border-right: 1px solid #222;
  padding-right: 3px;
}

tbody tr.rest td {
  height: auto;
}

.tab {
  position: absolute;
  display: flex;
  align-items: center;
  justify-content: center;
  padding: 0;
  border: 0;
  background: #222;
}

.side-tab {
  right: 0;
  top: 14px;
  width: 7px;
  height: 12px;
}

.bottom-tab {
  right: 13px;
  bottom: 0;
  width: 12px;
  height: 5px;
}

/* viewport and UV editor */
.settings {
  position: relative;
  display: flex;
  justify-content: space-between;
  flex: none;
  height: 23px;
}

.strip {
  display: flex;
  align-items: center;
  gap: 4px;
  padding: 0 7px 0 6px;
  border-radius: 0 0 4px 0;
  background: #363636;
}

.strip .btn {
  width: 16px;
}

.strip-right {
  box-sizing: border-box;
  width: 126px;
  padding: 0 0 0 7px;
  overflow: hidden;
  border-radius: 0 0 0 4px;
}

.strip-right .xyz {
  gap: 1px;
}

.strip-right .xyz .btn {
  width: 14px;
}

.strip-right .options {
  width: 64px;
}

.strip-uv {
  padding-left: 7px;
  background: #2e2e2e;
}

.view-body {
  position: relative;
  display: flex;
  align-items: flex-start;
  gap: 16px;
  padding: 7px 6px 0;
}

.uv-body {
  justify-content: space-between;
  padding: 8px 7px 0;
}

.view-label {
  margin: 0;
  color: #f2f2f2;
  line-height: 16px;
}

.axis-text {
  font-size: 9px;
}

.nav-gizmos {
  display: flex;
  flex-direction: column;
  gap: 3px;
  padding-right: 1px;
}

.round {
  display: flex;
  align-items: center;
  justify-content: center;
  width: 24px;
  height: 24px;
  padding: 0;
  border: 0;
  border-radius: 50%;
  background: #232323;
}

.uv-tab {
  right: 0;
  top: 7px;
  width: 7px;
  height: 12px;
}

.marks {
  position: absolute;
  inset: 0;
  width: 100%;
  height: 100%;
  pointer-events: none;
  font: 18px "Noto Sans", sans-serif;
}
</style>
